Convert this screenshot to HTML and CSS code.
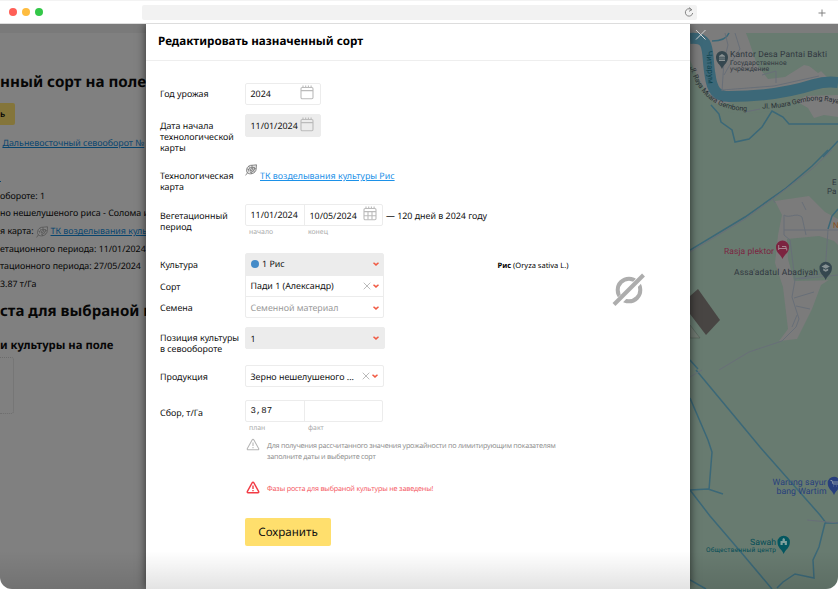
FILE: index.html
```html
<!DOCTYPE html>
<html lang="ru">
<head>
<meta charset="utf-8">
<title>Редактировать назначенный сорт</title>
<link rel="stylesheet" href="styles.css">
</head>
<body>
<svg class="defs" width="0" height="0">
  <symbol id="cal" viewBox="0 0 14 15"><rect x="1" y="2.5" width="12" height="11.3" rx="1.2"/><path d="M1 5.6h12M3 .6v2M5.7 .6v2M8.4 .6v2M11.1 .6v2"/></symbol>
  <symbol id="calgrid" viewBox="0 0 14 15"><rect x="1" y="2.5" width="12" height="11.3" rx="1.2"/><path d="M1 5.6h12M3 .6v2M5.7 .6v2M8.4 .6v2M11.1 .6v2M1 9.7h12M5 5.6v8M9 5.6v8"/></symbol>
  <symbol id="chev" viewBox="0 0 6 4"><path d="M.5 .8L3 2.900 5.500 .8"/></symbol>
  <symbol id="cross" viewBox="0 0 8 8"><path d="M.7 .7l6.6 6.6M7.3 .7L.7 7.3"/></symbol>
  <symbol id="warn" viewBox="0 0 14 13"><path d="M7 1.2Q7.5 1.2 7.9 1.9L12.7 10.6Q13 11.8 12 11.8H2Q1 11.8 1.3 10.6L6.1 1.9Q6.5 1.2 7 1.2zM7 4.5v3.4M7 9v1.2"/></symbol>
  <symbol id="leaf" viewBox="0 0 12 12"><path d="M.6 11.4L2.5 8.7M2.3 8.8C.8 6.5 1.500 2.500 5.300 1.400c2.500-.6 4.400 0 6.200-.6-.4 1.700.3 3.100-.7 5.800C9.600 9.800 4.500 10.800 2.300 8.800zM3.800 7.500C3.300 4.500 5 3 9.500 3.500 9.500 7 7 8.500 5 8M5.300 6.500c0-1.500 1-2 2.700-1.800-.2 1.500-1 2.200-2.700 1.800zM2.300 5l1.500.5M4 2.500l.8 1.200M7 1.500v1.800M10.800 4.500l-1.500.5M9.500 7.700L8.300 6.800M6.500 9.500L6 8.200"/></symbol>
</svg>
<header class="browser">
  <i class="dot red"></i><i class="dot amber"></i><i class="dot green"></i>
  <div class="address"><svg width="10" height="11" viewBox="0 0 10 11"><path d="M8 3.200A3.700 3.700 0 1 0 8.700 6M5 .5l2.600 2.200L5 4.400"/></svg></div>
  <svg class="plus" width="8" height="8" viewBox="0 0 8 8"><path d="M4 .5v7M.5 4h7"/></svg>
</header>
<div class="stage">
  <section class="page">
    <div class="strip"></div>
    <h1>нный сорт на поле</h1>
    <div class="page-btn">ь</div>
    <a class="rotation">Дальневосточный севооборот №</a>
    <div class="cut-link"></div>
    <ul>
      <li>обороте: 1</li>
      <li>но нешелушеного риса - Солома и</li>
      <li>я карта: <svg class="leaf" width="12" height="12"><use href="#leaf"/></svg> <a>ТК возделывания куль</a></li>
      <li>етационного периода: 11/01/2024</li>
      <li>тационного периода: 27/05/2024</li>
      <li>3.87 т/Га</li>
    </ul>
    <h2>ста для выбраной к</h2>
    <h3>и культуры на поле</h3>
    <div class="slot"></div>
  </section>

  <main class="modal">
    <div class="modal-head">Редактировать назначенный сорт</div>
    <form>
      <div class="row r-year"><label>Год урожая</label>
        <div class="box short"><span>2024</span><svg class="cal" width="14" height="15"><use href="#cal"/></svg></div></div>
      <div class="row r-start"><label>Дата начала<br>технологической<br>карты</label>
        <div class="box short filled"><span>11/01/2024</span><svg class="cal" width="14" height="15"><use href="#cal"/></svg></div></div>
      <div class="row r-tech"><label>Технологическая<br>карта</label>
        <svg class="leaf" width="12" height="12"><use href="#leaf"/></svg><a class="tk">ТК возделывания культуры Рис</a></div>
      <div class="row r-veg"><label>Вегетационный<br>период</label>
        <div class="pair-wrap">
          <div class="box pair"><span class="first">11/01/2024</span><span class="second">10/05/2024</span><svg class="cal" width="14" height="15"><use href="#calgrid"/></svg></div>
          <div class="hints"><span>начало</span><span>конец</span></div>
        </div><span class="days">— 120 дней в 2024 году</span></div>
      <div class="row r-crop">
        <div class="labels"><label>Культура</label><label>Сорт</label><label>Семена</label></div>
        <div class="stack">
          <div class="select filled"><i class="bullet"></i><span>1 Рис</span><svg class="chev" width="6" height="4"><use href="#chev"/></svg></div>
          <div class="select"><span>Пади 1 (Александр)</span><svg class="cross" width="8" height="8"><use href="#cross"/></svg><svg class="chev" width="6" height="4"><use href="#chev"/></svg></div>
          <div class="select ghost"><span>Семенной материал</span><svg class="chev" width="6" height="4"><use href="#chev"/></svg></div>
        </div>
        <div class="latin"><b>Рис</b> (Oryza sativa L.)</div>
        <svg class="none" width="34" height="34" viewBox="0 0 34 34"><circle cx="17" cy="17" r="11.300"/><path class="gap" d="M4 31.500L32 2.500"/><path d="M2 31.500L31.500 2"/></svg>
      </div>
      <div class="row r-pos"><label>Позиция культуры<br>в севообороте</label>
        <div class="box select-box filled"><span>1</span><svg class="chev" width="6" height="4"><use href="#chev"/></svg></div></div>
      <div class="row r-prod"><label>Продукция</label>
        <div class="box select-box narrow"><span>Зерно нешелушеного ...</span><svg class="cross" width="8" height="8"><use href="#cross"/></svg><svg class="chev" width="6" height="4"><use href="#chev"/></svg></div></div>
      <div class="row r-yield"><label>Сбор, т/Га</label>
        <div class="pair-wrap">
          <div class="box pair"><span class="first mono">3,87</span></div>
          <div class="hints"><span>план</span><span>факт</span></div>
        </div></div>
      <div class="note"><svg width="14" height="13"><use href="#warn"/></svg><p>Для получения рассчитанного значения урожайности по лимитирующим показателям<br>заполните даты и выберите сорт</p></div>
      <div class="note error"><svg width="14" height="13"><use href="#warn"/></svg><p>Фазы роста для выбраной культуры не заведены!</p></div>
      <button type="button">Сохранить</button>
    </form>
  </main>

  <svg class="map" width="148" height="565" viewBox="690 24 148 565">
    <rect x="690" y="24" width="148" height="565" fill="#687b70"/>
    <path fill="#7c7c7c" d="M690 24h148v9h-92l4 6 6 15 3 12 9 12 11-3 18-11 11 1 10 8 10-6v18l-50 6-50 12-55 2-20-20-16-22z"/>
    <path fill="#687b70" d="M690 60l10 22 18 24 12 6 15 2 25-3 20 2v20h-100z"/>
    <path fill="#687b70" d="M746 33h92v37l-10 8-10-10-14-3-19 12-17 2-11-14-4-12-4-12z"/>
    <path fill="#7c7c7c" d="M838 95v22l-14-2-10 3-6-10-12-7 10-5z"/>
    <path fill="#7b7b7b" d="M775 201l34-5 16 16 13 7v55l-17 11-9 24-15 30-18 2 9-12-5-42-8-24 3-28 4-20z"/>
    <path fill="#687b70" d="M787 239l32-3 15 5 4 4v35l-44 1-6-22z"/>
    <path fill="none" stroke="#3c6878" stroke-width="11" d="M690 38.500c22-2 16 14 20 36 2 16 7 22 19 22 30 0 60-4 85-12 10-3 16-3 24-2"/>
    <g fill="none" stroke="#3b6878" stroke-width="1.500">
      <path d="M712 41c10 0 15-3 17-8M711 105l8 9 2 8 11 8 3 12 14-3 13-12 10-16 11 6 6 7h53M838 141l-15 16"/>
      <path d="M690 250L745 217 786 188 812 166 828 150"/>
      <path d="M696 370L760 447 820 515 826 523h12M825 523l-6 24-6 13 1 18-19-4-12 8-6 6M690 398l18 42 4 12-3 38M690 490l18-1 15 5M690 490l20 26 30 35 32 38M690 360l8 9M690 580l16 9M828 229l4-13 6-7"/>
    </g>
    <g fill="none" stroke="#686f78" stroke-width="1">
      <path d="M690 252L745 219 774 198 812 169 832 150M690 377l12-7M719 370l30-18 33-11 14-14 3-8-7-22 3-17-5-40-6-5v-20c5 4 12-3 18 2l4 18M784 230h54M828 230l-3 43-30 6M799 279l39-4M794 298l20-6M796 306l14 3M797 315l-5 12M773 199l2 4M802 202l4 8M725 33l3 12-4 16-2 30M735 33l5 16-8 12-8 14M722 90l52-4 45-10M762 75l14-4v12M745 112l15-3M807 520l31 3"/>
    </g>
    <path fill="#484543" d="M690 296l8-7 22 31-14 15-16-21z"/>
    <path fill="#707a72" stroke="#555e58" stroke-width=".7" d="M690 325l10 13h-10z"/>
    <g fill="#35474f"><path d="M722 69c-2-5-6-6-6-12a6 6 0 0 1 12 0c0 6-4 7-6 12z"/><path fill="#8b9394" d="M719 56l3-2 3 2v.8h-6zM719.500 57.300h1v2.500h-1zM721.500 57.300h1v2.500h-1zM723.500 57.300h1v2.500h-1zM719 60h6v1h-6z"/></g>
    <path fill="#7c2440" d="M782.500 259c-2-5-6.500-6-6.500-12a6.500 6.500 0 0 1 13 0c0 6-4.500 7-6.500 12z"/>
    <path fill="none" stroke="#a88590" d="M778.700 245v5M778.700 248.500h8v2M782 246.500h4v2"/>
    <path fill="#35474f" d="M825.700 280c-2-5-6.200-6-6.200-12a6.200 6.200 0 0 1 12.400 0c0 6-4.200 7-6.200 12z"/>
    <path fill="#879193" d="M821.500 266.500l4.200-2.200 4.200 2.200-4.200 2.200zM823.200 268.500l2.500 1.300 2.500-1.300v2l-2.500 1.200-2.500-1.200z"/>
    <path fill="#273f7d" d="M834 495c-2-5-6.300-6-6.300-12a6.300 6.300 0 0 1 12.600 0c0 6-4.300 7-6.300 12z"/>
    <path fill="none" stroke="#8795a5" d="M830.500 480.500h1.500l1 3.500h5M833 482h5M833.500 486h.5M836.500 486h.5"/>
    <path fill="#045760" d="M783.700 554c-2-5-6.200-6-6.200-12a6.200 6.200 0 0 1 12.400 0c0 6-4.200 7-6.200 12z"/>
    <path fill="#7fa09d" d="M780.500 545v-4h2v-2l1.200-1 1.200 1v2h2v4h-2.200v-2h-2v2z"/>
    <g class="mtext">
      <text x="730" y="57" font-size="8.500" textLength="97" fill="#30373f">Kantor Desa Pantai Bakti</text>
      <text x="730" y="64.500" font-size="6.800" textLength="56.500" fill="#30373f">Государственное</text>
      <text x="730" y="71.300" font-size="6.800" textLength="39" fill="#30373f">учреждение</text>
      <text x="724" y="253.500" font-size="8.500" textLength="50" fill="#7c2440">Rasja plektor</text>
      <text x="734" y="274.500" font-size="8.500" textLength="84" fill="#30373f">Assa'adatul Abadiyah</text>
      <text x="832" y="185" font-size="8" fill="#30373f">E</text>
      <text x="827" y="194" font-size="8" fill="#30373f">Pa</text>
      <text x="833" y="228" font-size="8" fill="#87511d">N</text>
      <text x="772.500" y="485" font-size="8.700" textLength="54" fill="#273f7d">Warung sayur</text>
      <text x="776.500" y="493.700" font-size="8.700" textLength="50" fill="#273f7d">bang Wartim</text>
      <text x="750" y="545" font-size="8.700" textLength="26" fill="#034c56">Sawah</text>
      <text x="706" y="552" font-size="6.500" textLength="70" fill="#034c56">Общественный центр</text>
      <path id="road1" fill="none" d="M690 67C697 92 714 112 752 111"/>
      <path id="road2" fill="none" d="M762 108.500C800 109 806 92 846 106"/>
      <text class="road" font-size="7"><textPath href="#road1">Jl. Raya Muara Gembong</textPath></text>
      <text class="road" font-size="7"><textPath href="#road2">Jl. Muara Gembong Raya</textPath></text>
      <text font-size="8" fill="#10434e" transform="translate(706.500 51) rotate(87)" textLength="33">Читарум</text>
    </g>
    <path stroke="#d5d5d5" fill="none" d="M696 30l9.500 9.500M705.500 30L696 39.500"/>
  </svg>
  <div class="fade"></div>
</div>
</body>
</html>
```
FILE: styles.css
```css
* { box-sizing: border-box; }
body { margin: 0; width: 838px; height: 589px; overflow: hidden; background: #fff; font: 8.900px/11px "Noto Sans", sans-serif; color: #111; display: flex; flex-direction: column; text-rendering: geometricPrecision; }
svg { display: block; flex: none; }
.defs { position: absolute; }
h1, h2, h3, ul, p { margin: 0; padding: 0; }
.browser { height: 24px; flex: none; display: flex; align-items: center; padding-left: 8.500px; border-top: 1px solid #f3f3f3; border-bottom: 1px solid #ddd; }
.dot { width: 8px; height: 8px; border-radius: 50%; margin-right: 5.200px; margin-top: -1px; }
.red { background: #ff5f57; }
.amber { background: #febc3f; }
.green { background: #33c748; }
.address { width: 555px; height: 15px; margin-left: 94px; margin-top: 1px; background: #f2f2f2; border-radius: 2px; display: flex; justify-content: flex-end; align-items: center; padding-right: 3px; }
.address path, .plus path { fill: none; stroke: #777; stroke-width: .9; }
.plus { margin-left: 121px; margin-top: 1px; }

.stage { position: relative; flex: 1; display: grid; grid-template-columns: 146px 544px 148px; overflow: hidden; border-radius: 0 0 12px 12px; }
.fade { position: absolute; left: 0; right: 0; bottom: 0; height: 38px; background: linear-gradient(rgba(0,0,0,0), rgba(0,0,0,.11)); z-index: 2; }

.page { background: #808080; color: #060606; overflow: hidden; white-space: nowrap; font-size: 8.850px; }
.strip { height: 9px; background: #7a7a7a; }
h1 { font-size: 15.200px; line-height: 22px; margin-top: 38px; }
.page-btn { width: 15px; height: 22px; margin-top: 10px; border-radius: 0 2px 2px 0; background: #84753a; font-size: 9px; line-height: 21px; font-weight: 600; }
.page a { color: #08456f; text-decoration: underline; }
.page .rotation { display: block; margin: 13px 0 0 2.500px; line-height: 11px; }
.cut-link { width: 1px; height: 1px; margin-top: 31.500px; background: #08456f; }
.page ul { list-style: none; margin-top: 6px; }
.page li { height: 17.700px; line-height: 17.700px; display: flex; align-items: center; }
.page li .leaf { margin: 0 3px 0 2px; }
h2 { font-size: 15px; line-height: 20px; margin-top: 7px; }
h3 { font-size: 11.300px; line-height: 16px; margin-top: 17px; }
.slot { width: 14px; height: 57px; margin-top: 3px; border: 1px dotted #6c6c6c; border-left: 0; border-radius: 0 3px 3px 0; }
.leaf { fill: #9994; stroke: #444; stroke-width: .6; }

.modal { position: relative; background: #fff; box-shadow: 0 0 9px rgba(0,0,0,.65); z-index: 1; }
.modal-head { height: 37px; padding: 10px 12px; border-bottom: 1px solid #eee; font-size: 11.650px; line-height: 16px; font-weight: 700; color: #000; }
form { padding: 22px 0 0 14px; }
.row { display: flex; align-items: flex-start; }
label { width: 85px; flex: none; padding-top: 6px; display: block; white-space: nowrap; }
.r-year { height: 31px; }
.r-year label, .r-pos label { padding-top: 5.400px; }
.r-start { height: 50px; }
.r-tech { height: 40px; }
.r-veg { height: 49px; }
.r-crop { height: 74px; }
.r-pos { height: 38px; }
.r-prod { height: 35px; }
.r-yield { height: 38px; }
.r-yield label { padding-top: 7px; }
.box { height: 22px; border: 1px solid #ececec; border-radius: 2px; display: flex; align-items: center; padding-left: 4.500px; white-space: nowrap; }
.box span, .select span { flex: 1; }
.short { width: 76px; padding-right: 6px; }
.short span { margin-top: -1px; }
.filled { background: #ececec; }
.short.filled { height: 23px; }
.cal { fill: none; stroke: #bbb; stroke-width: 1.100; margin-top: -3px; }
.r-tech .leaf { margin-right: 3px; }
.tk { color: #1c91e8; text-decoration: underline; padding-top: 6px; }
.pair { width: 138px; padding-right: 5px; }
.box .first { flex: 0 0 54.500px; height: 20px; line-height: 20px; border-right: 1px solid #ececec; }
.box .second { padding-left: 4.500px; }
.box .mono { font: 9px/20px "Liberation Mono", monospace; }
.hints { display: flex; font-size: 6.900px; color: #aaa; padding: 1px 0 0 4px; }
.hints span { width: 59px; }
.days { padding: 6px 0 0 3px; }
.labels label { height: 21.500px; padding-top: 6px; }
.stack { width: 139px; height: 65px; border: 1px solid #ececec; border-radius: 2px; }
.select { height: 21.500px; display: flex; align-items: center; padding: 0 4.500px; border-bottom: 1px solid #ececec; white-space: nowrap; }
.select span { margin-top: -1px; }
.select:last-child { border-bottom: 0; }
.bullet { width: 8px; height: 8px; border-radius: 50%; background: #448bc8; margin-right: 3.500px; margin-top: -1px; }
.ghost { color: #999; }
.chev { fill: none; stroke: #f15a43; stroke-width: 1.500; }
.cross { fill: none; stroke: #bbb; stroke-width: 1; margin-right: 2px; }
.latin { margin: 8px 0 0 113.500px; width: 114.500px; font-size: 7.500px; color: #000; }
.none { margin-top: 20px; fill: none; stroke: #adadad; stroke-width: 4; }
.none .gap { stroke: #fff; stroke-width: 7; }
.select-box { width: 140px; padding-right: 5px; }
.narrow { width: 139px; }
.note { display: flex; margin-left: 86px; height: 42px; font: 7.200px/11px "Open Sans", sans-serif; letter-spacing: -.24px; color: #888; white-space: nowrap; }
.note svg { fill: none; stroke: #b5b5b5; stroke-width: 1.100; margin-right: 7px; }
.note p { padding-top: 3px; }
.note.error { height: 38px; color: #f4515a; padding-top: 1px; letter-spacing: -.18px; }
.error svg { stroke: #f23b45; stroke-width: 1.400; }
button { display: block; margin: 0 0 0 85px; width: 86px; height: 28px; border: 0; padding: 0; border-radius: 2px; background: #ffdf6d; font: 11.600px "Noto Sans", sans-serif; color: #111; text-rendering: geometricPrecision; }
.mtext { font-family: Roboto, sans-serif; }
.road { fill: #282e34; }
```
